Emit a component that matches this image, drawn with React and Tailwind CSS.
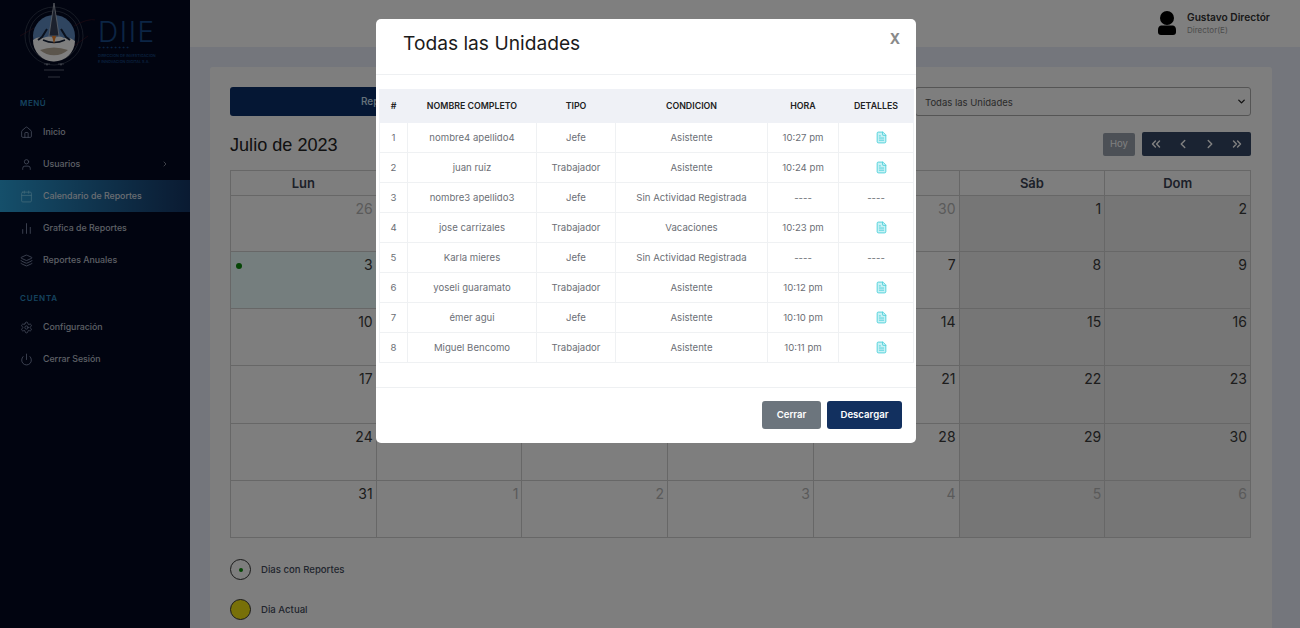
import { Calendar, ChevronDown, ChevronLeft, ChevronRight, ChevronsLeft, ChevronsRight, FileText, Home, Layers, Power, Settings, User } from "lucide-react";

const font = { fontFamily: "Inter, 'Noto Sans', sans-serif" };

const menu = [
  { label: "Inicio", icon: Home },
  { label: "Usuarios", icon: User, arrow: true },
  { label: "Calendario de Reportes", icon: Calendar, active: true },
  { label: "Grafica de Reportes", icon: Bars },
  { label: "Reportes Anuales", icon: Layers },
];

const account = [
  { label: "Configuración", icon: Settings },
  { label: "Cerrar Sesión", icon: Power },
];

const weeks = [
  [26, 27, 28, 29, 30, 1, 2],
  [3, 4, 5, 6, 7, 8, 9],
  [10, 11, 12, 13, 14, 15, 16],
  [17, 18, 19, 20, 21, 22, 23],
  [24, 25, 26, 27, 28, 29, 30],
  [31, 1, 2, 3, 4, 5, 6],
];

const weekHeights = ["h-[56px]", "h-[57px]", "h-[57px]", "h-[58px]", "h-[57px]", "h-[57px]"];

const rows = [
  ["nombre4 apellido4", "Jefe", "Asistente", "10:27 pm", true],
  ["juan ruiz", "Trabajador", "Asistente", "10:24 pm", true],
  ["nombre3 apellido3", "Jefe", "Sin Actividad Registrada", "----", false],
  ["jose carrizales", "Trabajador", "Vacaciones", "10:23 pm", true],
  ["Karla mieres", "Jefe", "Sin Actividad Registrada", "----", false],
  ["yoseli guaramato", "Trabajador", "Asistente", "10:12 pm", true],
  ["émer agui", "Jefe", "Asistente", "10:10 pm", true],
  ["Miguel Bencomo", "Trabajador", "Asistente", "10:11 pm", true],
];

function Bars(props) {
  return (
    <svg viewBox="0 0 24 24" fill="none" stroke="currentColor" strokeWidth="1.5" strokeLinecap="round" width={props.size} height={props.size}>
      <path d="M5 14v7M12 3v18M19 10v11" />
    </svg>
  );
}

function Logo() {
  return (
    <div className="flex h-[93px] items-start">
      <svg viewBox="0 0 95 84" width="95" height="84" className="shrink-0" fill="none">
        <circle cx="54" cy="36" r="29" stroke="#3a4256" strokeWidth="0.8" />
        <circle cx="54" cy="36" r="25" stroke="#3a4256" strokeWidth="0.8" />
        <path d="M20 36l14-8M74 26q14-8 22-6M74 46l14-10" stroke="#4a1826" strokeWidth="0.6" />
        <circle cx="54" cy="36" r="21" fill="#5f8ac0" />
        <path d="M33 40q5-4 10-2q6-3 11 0q6-3 10 0q6-1 11 3a21 21 0 0 1-42-1z" fill="#fff" />
        <path d="M40 50q14-5 28 0a21 21 0 0 1-28 0z" fill="#b7aa98" />
        <path d="M47 29l-5 8-4 3M61 29l5 8 4 3" stroke="#16233a" strokeWidth="2" />
        <path d="M43 40q11 5 22 0" stroke="#16233a" strokeWidth="1.5" />
        <path d="M54 3l3 19 2 14h-10l2-14z" fill="#39435a" stroke="#cfd4dd" strokeWidth="0.7" />
        <path d="M52 36h4l-2 8z" fill="#f0842c" />
        <path d="M44 64h6M58 64h6M44 70h20M48 77h12" stroke="#7a8192" strokeWidth="0.8" />
        <circle cx="47" cy="64.500" r="1" fill="#7a8192" />
        <circle cx="61" cy="64.500" r="1" fill="#7a8192" />
      </svg>
      <div className="mt-[18px] ml-[3px] w-[60px] text-[#184a88]">
        <div className="text-[28px] leading-[28px] font-light tracking-[1.6px]">DIIE</div>
        <div className="text-[4px] leading-[4px] font-medium whitespace-nowrap">✦ ✦ ✦ ✦ ✦ ✦ ✦ ✦</div>
        <div className="mt-[3px] text-[3.8px] leading-[6px] font-medium whitespace-nowrap">DIRECCION DE INVESTIGACION</div>
        <div className="text-[3.8px] leading-[6px] font-medium whitespace-nowrap">E INNOVACION DIGITAL S.A.</div>
      </div>
    </div>
  );
}

function NavItem({ item }) {
  const Icon = item.icon;
  return (
    <div className={`flex h-[32px] items-center pl-[20px] pr-[21px] text-[#bcc0cc] ${item.active ? "bg-gradient-to-r from-[#2a9fd6] to-[#143564] text-[#d6dde4]" : ""}`}>
      <span className={`w-[23px] ${item.active ? "text-[#7fd0f0]" : "text-[#8d99b8]"}`}>
        <Icon size={13} strokeWidth={1.5} />
      </span>
      <span className="flex-1 text-[8.8px] font-medium">{item.label}</span>
      {item.arrow && <ChevronRight size={8} />}
    </div>
  );
}

function Sidebar() {
  return (
    <aside className="h-full w-[190px] shrink-0 bg-[#020820]">
      <Logo />
      <div className="mt-[5px] pl-[20px] text-[8px] leading-[10px] font-semibold tracking-[0.5px] text-[#2a87bd]">MENÚ</div>
      <div className="mt-[8px]">
        {menu.map((item) => <NavItem item={item} key={item.label} />)}
      </div>
      <div className="mt-[17px] pl-[20px] text-[8px] leading-[10px] font-semibold tracking-[0.8px] text-[#2a87bd]">CUENTA</div>
      <div className="mt-[8px]">
        {account.map((item) => <NavItem item={item} key={item.label} />)}
      </div>
    </aside>
  );
}

function Topbar() {
  return (
    <header className="flex h-[47px] items-center justify-end bg-white pr-[30px]">
      <svg viewBox="0 0 18 24" width="18" height="24" fill="#000" className="mb-[1px]">
        <circle cx="9" cy="7" r="7" />
        <path d="M3 14.500h12q3 .5 3 4.500v2q0 3-3 3H3q-3 0-3-3v-2q0-4 3-4.500z" />
      </svg>
      <div className="ml-[11px] w-[83px]">
        <div className="mb-[1px] text-[10.2px] leading-[13px] font-semibold whitespace-nowrap text-[#333]">Gustavo Directór</div>
        <div className="text-[8px] leading-[11px] text-[#999]">Director(E)</div>
      </div>
    </header>
  );
}

function CalendarGrid() {
  return (
    <div className="border-t border-l border-[#cfcfcf]">
      <div className="grid grid-cols-7">
        {["Lun", "Mar", "Mié", "Jue", "Vie", "Sáb", "Dom"].map((d) => (
          <div className="h-[25px] border-r border-b border-[#cfcfcf] text-center text-[13px] leading-[25px] font-semibold text-[#3b4252]" key={d}>{d}</div>
        ))}
      </div>
      {weeks.map((week, w) => (
        <div className={`grid grid-cols-7 ${weekHeights[w]}`} key={w}>
          {week.map((day, d) => {
            const muted = (w === 0 && d < 5) || (w === 5 && d > 0);
            const today = w === 1 && d === 0;
            const weekend = d > 4;
            return (
              <div className={`relative border-r border-b border-[#cfcfcf] pt-[3px] pr-[3px] text-right text-[14px] leading-[20px] ${muted ? "text-[#b5b5b5]" : "text-[#3a3a3a]"} ${today ? "bg-[#eafcfc]" : weekend ? "bg-[#ececec]" : ""}`} key={d}>
                {today && <span className="absolute top-[11px] left-[5px] h-[6px] w-[6px] rounded-full bg-[#0a8a0a]" />}
                {day}
              </div>
            );
          })}
        </div>
      ))}
    </div>
  );
}

function Page() {
  return (
    <main className="min-w-0 flex-1 overflow-hidden bg-[#e8edf9]">
      <Topbar />
      <div className="mt-[20px] ml-[20px] w-[1062px] rounded-[3px] bg-[#fdfdfd] pt-[20px] pr-[21px] pb-[20px] pl-[20px]">
        <div className="flex gap-[9px]">
          <button className="h-[29px] w-[676px] rounded-[3px] bg-[#0b2f68] pl-[131px] text-left text-[10px] font-medium text-[#cfe3f5]">Reportes de Todas las Unidades</button>
          <div className="flex h-[29px] flex-1 items-center justify-between rounded-[3px] border border-[#aaa] pr-[3px] pl-[9px] text-[9.5px] text-[#555]">
            <span className="pt-[3px]">Todas las Unidades</span>
            <ChevronDown size={11} strokeWidth={3} color="#222" />
          </div>
        </div>
        <div className="mt-[16px] mb-[14px] flex h-[24px] items-center justify-between">
          <h2 className="pt-[3px] text-[18.1px] text-[#222]" style={{ fontFamily: "'Liberation Sans', sans-serif" }}>Julio de 2023</h2>
          <div className="flex items-center">
            <span className="flex h-[23px] w-[32px] items-center justify-center rounded-[2px] bg-[#98a0ac] text-[9.5px] text-[#fff]">Hoy</span>
            <div className="ml-[7px] flex h-[24px] w-[109px] items-center justify-around rounded-[2px] bg-[#344664] px-[1px] text-white">
              <ChevronsLeft size={14} strokeWidth={2.5} />
              <ChevronLeft size={14} strokeWidth={2.5} />
              <ChevronRight size={14} strokeWidth={2.5} />
              <ChevronsRight size={14} strokeWidth={2.5} />
            </div>
          </div>
        </div>
        <CalendarGrid />
        <div className="mt-[21px] flex items-center gap-[10px]">
          <span className="flex h-[21px] w-[21px] items-center justify-center rounded-full border border-[#333]">
            <span className="h-[4px] w-[4px] rounded-full bg-[#0a8a0a]" />
          </span>
          <span className="pt-[1px] text-[9.6px] font-medium text-[#444c5c]">Dias con Reportes</span>
        </div>
        <div className="mt-[19px] flex items-center gap-[10px]">
          <span className="h-[21px] w-[21px] rounded-full border border-[#333] bg-[#f0e010]" />
          <span className="pt-[1px] text-[9.6px] font-medium text-[#444c5c]">Dia Actual</span>
        </div>
      </div>
    </main>
  );
}

function Modal() {
  return (
    <div className="fixed inset-0 flex justify-center bg-black/50 pt-[19px] pr-[8px]">
      <div className="h-[424px] w-[540px] rounded-[5px] bg-white">
        <div className="flex h-[56px] justify-between border-b border-[#eef0f2] pr-[16px] pl-[27px]">
          <h3 className="pt-[12px] text-[19.2px] leading-[24px] text-[#1b1b1b]">Todas las Unidades</h3>
          <span className="pt-[10px] text-[14px] leading-[20px] font-bold text-[#8a8a8a]">X</span>
        </div>
        <div className="px-[3px] pt-[14px]">
          <table className="w-[534px] table-fixed border-collapse text-center">
            <colgroup>
              <col className="w-[28px]" />
              <col className="w-[129px]" />
              <col className="w-[79px]" />
              <col className="w-[152px]" />
              <col className="w-[71px]" />
              <col className="w-[75px]" />
            </colgroup>
            <thead>
              <tr className="h-[33px] bg-[#eff1f6] text-[8.8px] text-[#222]">
                {["#", "NOMBRE COMPLETO", "TIPO", "CONDICION", "HORA", "DETALLES"].map((h) => (
                  <th className="border border-[#eff1f6] font-semibold" key={h}>{h}</th>
                ))}
              </tr>
            </thead>
            <tbody>
              {rows.map((row, i) => (
                <tr className="h-[30px] text-[9.6px] text-[#6c6f76]" key={row[0]}>
                  <td className="border border-[#eff1f3] pt-[2px]">{i + 1}</td>
                  <td className="border border-[#eff1f3] pt-[2px]">{row[0]}</td>
                  <td className="border border-[#eff1f3] pt-[2px]">{row[1]}</td>
                  <td className="border border-[#eff1f3] pt-[2px]">{row[2]}</td>
                  <td className="border border-[#eff1f3] pt-[2px]">{row[3]}</td>
                  <td className="border border-[#eff1f3] pt-[2px]">
                    {row[4] ? (
                      <FileText size={13} color="#4fd0da" fill="#c8f2f5" strokeWidth={1.7} className="mx-auto translate-x-[5px] -translate-y-[1px]" />
                    ) : "----"}
                  </td>
                </tr>
              ))}
            </tbody>
          </table>
        </div>
        <div className="mt-[24px] flex justify-end gap-[6px] border-t border-[#eef0f2] pt-[13px] pr-[14px]">
          <button className="h-[28px] w-[59px] rounded-[3px] bg-[#6c757d] pt-[1px] text-[9.6px] font-semibold text-white">Cerrar</button>
          <button className="h-[28px] w-[75px] rounded-[3px] bg-[#12305f] pt-[1px] text-[9.6px] font-semibold text-white">Descargar</button>
        </div>
      </div>
    </div>
  );
}

export default function App() {
  return (
    <div className="relative flex h-screen overflow-hidden" style={font}>
      <Sidebar />
      <Page />
      <Modal />
    </div>
  );
}
